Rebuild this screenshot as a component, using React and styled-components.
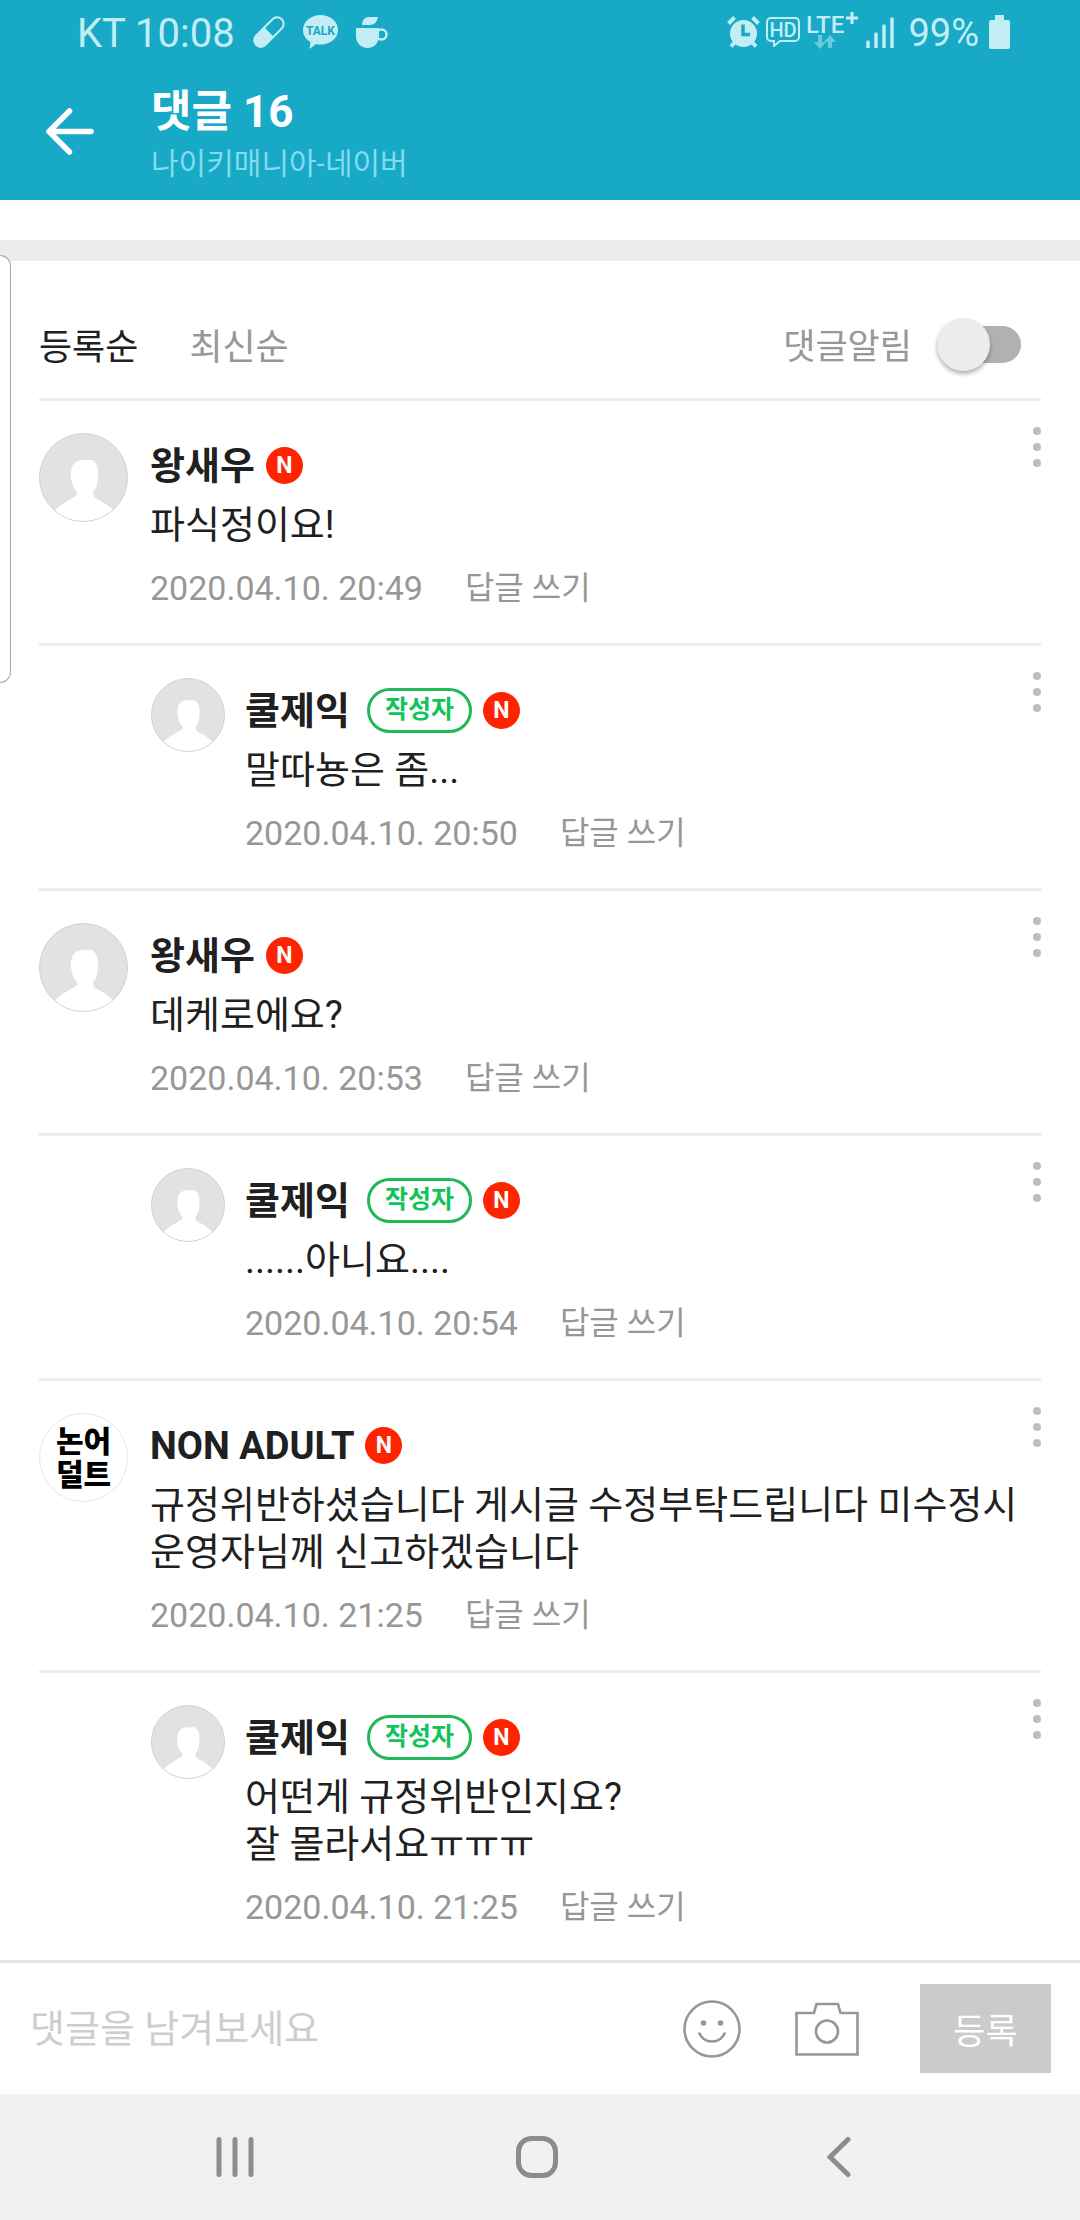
import React, { useState } from "react";
import styled, { createGlobalStyle } from "styled-components";

const GlobalStyle = createGlobalStyle`
  * {
    box-sizing: border-box;
  }
  body {
    margin: 0;
    background-color: #fff;
    color: #202020;
    font-family: Roboto, "Noto Sans CJK KR", sans-serif;
  }
  button {
    border: none;
    padding: 0;
    background: none;
    color: inherit;
    font: inherit;
    cursor: pointer;
  }
  svg {
    display: block;
    flex: none;
  }
`;

const Layout = styled.div`
  position: relative;
  display: flex;
  flex-direction: column;
  min-height: 100vh;
`;

const Top = styled.header`
  background-color: #17a9c5;
`;

const StatusBar = styled.div`
  display: flex;
  justify-content: space-between;
  align-items: center;
  height: 64px;
  padding: 0 70px 0 77px;
  color: #c3edf5;
`;

const StatusGroup = styled.div`
  display: flex;
  align-items: center;
  gap: ${(props) => props.$gap};
`;

const StatusText = styled.span`
  padding-top: 3px;
  font-size: 40px;
  line-height: 61px;
`;

const Percent = styled(StatusText)`
  margin: 0 4px 0 8px;
  font-size: 38px;
`;

const TitleBar = styled.div`
  display: flex;
  align-items: center;
  gap: 56px;
  height: 136px;
  padding: 0 45px;
`;

const TitleBox = styled.div`
  padding-top: 6px;
`;

const TitleText = styled.h1`
  margin: 0;
  color: #fff;
  font-size: 44px;
  font-weight: 700;
  line-height: 56px;
`;

const CafeName = styled.div`
  color: #80dcee;
  font-size: 30px;
  line-height: 47px;
`;

const Band = styled.div`
  height: 21px;
  margin-top: 40px;
  background-color: #ececec;
`;

const EdgeHandle = styled.div`
  position: absolute;
  top: 255px;
  left: 0;
  width: 11px;
  height: 428px;
  border: 1px solid #a8a8a8;
  border-left: none;
  border-radius: 0 14px 14px 0;
  background-color: #fff;
`;

const Content = styled.main`
  flex: 1;
  padding: 0 39px;
`;

const SortRow = styled.div`
  display: flex;
  align-items: center;
  gap: 51px;
  height: 137px;
  padding: 30px 20px 0 0;
`;

const SortBtn = styled.button`
  padding-top: 6px;
  color: ${(props) => (props.$active ? "#202020" : "#979797")};
  font-size: 36px;
  line-height: 48px;
`;

const AlarmLabel = styled.label`
  display: flex;
  align-items: center;
  gap: 25px;
  margin-left: auto;
  color: #979797;
  font-size: 35px;
  line-height: 48px;

  & > span {
    padding-top: 6px;
  }
`;

const Switch = styled.input.attrs({ type: "checkbox", role: "switch" })`
  appearance: none;
  position: relative;
  width: 84px;
  height: 53px;
  margin: 0;
  cursor: pointer;

  &::before {
    content: "";
    position: absolute;
    inset: 8px 0;
    border-radius: 19px;
    background-color: #b1b1b1;
  }
  &::after {
    content: "";
    position: absolute;
    top: 0;
    left: ${(props) => (props.checked ? "31px" : "0")};
    width: 53px;
    height: 53px;
    border-radius: 50%;
    background-color: #ececec;
    box-shadow: 0 3px 4px rgba(0, 0, 0, 0.3);
  }
`;

const CommentList = styled.ul`
  margin: 0;
  padding: 0;
  list-style: none;
`;

const CommentItem = styled.li`
  display: flex;
  align-items: flex-start;
  padding: 26px 0 35px ${(props) => (props.$reply ? "112px" : "0")};
  border-top: 3px solid #ececec;

  &:last-child {
    padding-bottom: 33px;
  }
`;

const Avatar = styled.div`
  display: grid;
  place-content: center;
  flex: none;
  width: ${(props) => (props.$reply ? "74px" : "89px")};
  height: ${(props) => (props.$reply ? "74px" : "89px")};
  margin: 6px ${(props) => (props.$reply ? "20px" : "22px")} 0 0;
  border: 1px solid ${(props) => (props.$text ? "#e6e6e6" : "#d2d2d2")};
  border-radius: 50%;
  background-color: ${(props) => (props.$text ? "#fff" : "#e2e2e2")};
  overflow: hidden;
  color: #000;
  font-size: 30px;
  font-weight: 900;
  line-height: 33px;
  white-space: pre-line;
`;

const Body = styled.div`
  flex: 1;
  padding-top: 14px;
`;

const NameRow = styled.div`
  display: flex;
  align-items: center;
  height: 48px;
`;

const Name = styled.strong`
  padding-top: 2px;
  font-size: 38px;
  font-weight: 700;
  line-height: 48px;
`;

const WriterBadge = styled.span`
  height: 45px;
  margin-left: 17px;
  padding: 0 15px;
  border: 3px solid #20b858;
  border-radius: 23px;
  color: #10c45a;
  font-size: 25px;
  font-weight: 700;
  line-height: 38px;
`;

const NewBadge = styled.span`
  width: 37px;
  height: 37px;
  margin-left: 11px;
  border-radius: 50%;
  background-color: #ff2400;
  color: #fff;
  font-size: 23px;
  font-weight: 700;
  line-height: 37px;
  text-align: center;
`;

const Message = styled.p`
  margin: 13px 0 19px;
  font-size: 38px;
  line-height: 47px;
  white-space: pre-line;
  word-break: keep-all;
`;

const Meta = styled.div`
  display: flex;
  align-items: center;
  gap: 42px;
  height: 40px;
  color: #979797;
  font-size: 34px;
  line-height: 40px;
`;

const ReplyBtn = styled.button`
  font-size: 32px;
`;

const WriteBar = styled.form`
  display: flex;
  align-items: center;
  height: 134px;
  padding: 0 29px;
  border-top: 3px solid #e2e3e2;
  background-color: #fff;
`;

const CommentInput = styled.input`
  flex: 1;
  min-width: 0;
  height: 89px;
  border: none;
  padding: 0 1px;
  outline: none;
  background: none;
  color: #202020;
  font: inherit;
  font-size: 38px;

  &::placeholder {
    color: #cdcdcd;
    opacity: 1;
  }
`;

const Tools = styled.div`
  display: flex;
  align-items: center;
  gap: 54px;
  margin-right: 61px;
`;

const SubmitBtn = styled.button`
  width: 131px;
  height: 89px;
  background-color: #cbcbcb;
  color: #fff;
  font-size: 35px;
`;

const NavBar = styled.nav`
  display: grid;
  grid-template-columns: repeat(3, 1fr);
  align-items: center;
  height: 126px;
  padding: 0 90px 0 84px;
  background-color: #f1f1f1;
`;

const NavBtn = styled.button`
  display: grid;
  place-content: center;
  height: 100%;
`;

const PillIcon = () => (
  <svg width="32" height="32" viewBox="0 0 32 32">
    <g transform="rotate(45 16 16)">
      <rect x="9.5" y="-2" width="13" height="36" rx="6.5" fill="none" stroke="#c3edf5" strokeWidth="2" />
      <path d="M9 16h14v12a7 7 0 0 1-14 0z" fill="#c3edf5" />
    </g>
  </svg>
);

const TalkIcon = () => (
  <svg width="35" height="34" viewBox="0 0 35 34">
    <path
      d="M17.500 0C27 0 35 6.500 35 15c0 8-7.500 14.500-17 14.500-2 0-3.500 0-5-.5L6.500 34 7.500 27C3 24.500 0 20 0 15 0 6.500 8 0 17.500 0z"
      fill="#c3edf5"
    />
    <text x="17.500" y="20" textAnchor="middle" fontFamily="Roboto" fontSize="12" fontWeight="700" fill="#17a9c5">
      TALK
    </text>
  </svg>
);

const CupIcon = () => (
  <svg width="32" height="31" viewBox="0 0 32 31">
    <path d="M6 8C6 3 9 0 13 0h9c-1 5-4 8-8 8z" fill="#c3edf5" />
    <path d="M0 11h23v8c0 7-5 12-11.500 12S0 26 0 19z" fill="#c3edf5" />
    <circle cx="25.500" cy="17.500" r="5" fill="none" stroke="#c3edf5" strokeWidth="2.500" />
  </svg>
);

const AlarmIcon = () => (
  <svg width="33" height="32" viewBox="0 0 33 32">
    <g stroke="#c3edf5" fill="none">
      <path d="M1.500 7.500 7.500 1.500M25.500 1.500l6 6" strokeWidth="4" />
      <path d="M8 26l-4 4.500M25 26l4 4.500" strokeWidth="4" />
    </g>
    <circle cx="16.500" cy="17.500" r="13.500" fill="#c3edf5" />
    <path d="M16 8.500v10h7" fill="none" stroke="#17a9c5" strokeWidth="3.500" />
  </svg>
);

const HdIcon = () => (
  <svg width="34" height="30" viewBox="0 0 34 30">
    <path
      d="M5 1h24a4 4 0 0 1 4 4v15a4 4 0 0 1-4 4H14l-6 5v-5H5a4 4 0 0 1-4-4V5a4 4 0 0 1 4-4z"
      fill="none"
      stroke="#c3edf5"
      strokeWidth="2"
    />
    <text x="17" y="20" textAnchor="middle" fontFamily="Roboto" fontSize="20" fontWeight="500" fill="#c3edf5">
      HD
    </text>
  </svg>
);

const LteIcon = () => (
  <svg width="54" height="40" viewBox="0 0 54 40">
    <text x="0" y="21" fontFamily="Roboto" fontSize="24" fontWeight="500" fill="#c3edf5">
      LTE
    </text>
    <path d="M46 0v12M40 6h12" stroke="#c3edf5" strokeWidth="3" />
    <path d="M12 23h4v7h4l-6 7-6-7h4z" fill="#68cbde" />
    <path d="M22 36h4v-6h4l-6-7-6 7h4z" fill="#68cbde" />
  </svg>
);

const SignalIcon = () => (
  <svg width="28" height="31" viewBox="0 0 28 31">
    <path d="M2 25v5M10 17v13M18 9v21M26 2v28" stroke="#c3edf5" strokeWidth="3.500" strokeLinecap="round" />
  </svg>
);

const BatteryIcon = () => (
  <svg width="21" height="34" viewBox="0 0 21 34">
    <path d="M6 0h9v5h4a2 2 0 0 1 2 2v25a2 2 0 0 1-2 2H2a2 2 0 0 1-2-2V7a2 2 0 0 1 2-2h4z" fill="#c3edf5" />
  </svg>
);

const BackArrow = () => (
  <svg width="50" height="48" viewBox="0 0 50 48">
    <path
      d="M24.500 3 4 23.500 24.500 44M5 23.500h41"
      fill="none"
      stroke="#fff"
      strokeWidth="5.500"
      strokeLinecap="round"
      strokeLinejoin="round"
    />
  </svg>
);

const PersonIcon = ({ size }) => (
  <svg width={size} height={size} viewBox="0 0 90 90">
    <path
      d="M32 41c0-9 4-14 13-14 4 0 6 0 9 0l1 2c3 2 4 6 4 12 0 8-1 14-5 18 0 5 2 6 6 8 7 4 12 7 15 12v13H15V79c4-6 9-8 15-12 5-3 9-4 8-8-4-4-6-10-6-18z"
      fill="#fff"
    />
  </svg>
);

const MoreIcon = () => (
  <svg width="8" height="40" viewBox="0 0 8 40">
    <circle cx="4" cy="4" r="4" fill="#bdbdbd" />
    <circle cx="4" cy="20" r="4" fill="#bdbdbd" />
    <circle cx="4" cy="36" r="4" fill="#bdbdbd" />
  </svg>
);

const SmileIcon = () => (
  <svg width="58" height="58" viewBox="0 0 58 58">
    <circle cx="29" cy="29" r="27.500" fill="none" stroke="#979797" strokeWidth="2.600" />
    <circle cx="20.500" cy="23" r="2.800" fill="#979797" />
    <circle cx="37.500" cy="23" r="2.800" fill="#979797" />
    <path d="M16 32.500c5 12 21 12 26 0" fill="none" stroke="#979797" strokeWidth="2.600" />
  </svg>
);

const CameraIcon = () => (
  <svg width="64" height="54" viewBox="0 0 64 54">
    <path d="M1.500 11h17.500l2.500-9h21.500l2.500 9h17v41.500H1.500z" fill="none" stroke="#979797" strokeWidth="2.600" />
    <circle cx="32" cy="29.500" r="11" fill="none" stroke="#979797" strokeWidth="2.600" />
  </svg>
);

const comments = [
  { id: 1, name: "왕새우", text: "파식정이요!", date: "2020.04.10. 20:49" },
  { id: 2, name: "쿨제익", text: "말따뇽은 좀...", date: "2020.04.10. 20:50", reply: true },
  { id: 3, name: "왕새우", text: "데케로에요?", date: "2020.04.10. 20:53" },
  { id: 4, name: "쿨제익", text: "......아니요....", date: "2020.04.10. 20:54", reply: true },
  {
    id: 5,
    name: "NON ADULT",
    text: "규정위반하셨습니다 게시글 수정부탁드립니다 미수정시 운영자님께 신고하겠습니다",
    date: "2020.04.10. 21:25",
    avatar: "논어\n덜트",
  },
  {
    id: 6,
    name: "쿨제익",
    text: "어떤게 규정위반인지요?\n잘 몰라서요ㅠㅠㅠ",
    date: "2020.04.10. 21:25",
    reply: true,
  },
];

const App = () => {
  const [sort, setSort] = useState("등록순");
  const [alarm, setAlarm] = useState(false);

  return (
    <Layout>
      <GlobalStyle />
      <Top>
        <StatusBar>
          <StatusGroup $gap="18px">
            <StatusText>KT 10:08</StatusText>
            <PillIcon />
            <TalkIcon />
            <CupIcon />
          </StatusGroup>
          <StatusGroup $gap="6px">
            <AlarmIcon />
            <HdIcon />
            <LteIcon />
            <SignalIcon />
            <Percent>99%</Percent>
            <BatteryIcon />
          </StatusGroup>
        </StatusBar>
        <TitleBar>
          <button aria-label="뒤로">
            <BackArrow />
          </button>
          <TitleBox>
            <TitleText>댓글 16</TitleText>
            <CafeName>나이키매니아-네이버</CafeName>
          </TitleBox>
        </TitleBar>
      </Top>
      <Band />
      <EdgeHandle />
      <Content>
        <SortRow>
          {["등록순", "최신순"].map((item) => (
            <SortBtn key={item} $active={sort === item} onClick={() => setSort(item)}>
              {item}
            </SortBtn>
          ))}
          <AlarmLabel>
            <span>댓글알림</span>
            <Switch checked={alarm} onChange={(e) => setAlarm(e.target.checked)} />
          </AlarmLabel>
        </SortRow>
        <CommentList>
          {comments.map((item) => (
            <CommentItem key={item.id} $reply={item.reply}>
              <Avatar $reply={item.reply} $text={item.avatar}>
                {item.avatar || <PersonIcon size={item.reply ? 74 : 90} />}
              </Avatar>
              <Body>
                <NameRow>
                  <Name>{item.name}</Name>
                  {item.reply && <WriterBadge>작성자</WriterBadge>}
                  <NewBadge>N</NewBadge>
                </NameRow>
                <Message>{item.text}</Message>
                <Meta>
                  <span>{item.date}</span>
                  <ReplyBtn>답글 쓰기</ReplyBtn>
                </Meta>
              </Body>
              <button aria-label="더보기">
                <MoreIcon />
              </button>
            </CommentItem>
          ))}
        </CommentList>
      </Content>
      <WriteBar onSubmit={(e) => e.preventDefault()}>
        <CommentInput placeholder="댓글을 남겨보세요" aria-label="댓글" />
        <Tools>
          <button type="button" aria-label="이모티콘">
            <SmileIcon />
          </button>
          <button type="button" aria-label="사진">
            <CameraIcon />
          </button>
        </Tools>
        <SubmitBtn>등록</SubmitBtn>
      </WriteBar>
      <NavBar>
        <NavBtn aria-label="최근 앱">
          <svg width="38" height="40" viewBox="0 0 38 40">
            <path d="M3 2.500v35M19 2.500v35M35 2.500v35" stroke="#8c8c8c" strokeWidth="5" strokeLinecap="round" />
          </svg>
        </NavBtn>
        <NavBtn aria-label="홈">
          <svg width="42" height="42" viewBox="0 0 42 42">
            <rect x="2.500" y="2.500" width="37" height="37" rx="13" fill="none" stroke="#8c8c8c" strokeWidth="5" />
          </svg>
        </NavBtn>
        <NavBtn aria-label="뒤로 가기">
          <svg width="24" height="40" viewBox="0 0 24 40">
            <path d="M21 2.500 3 20l18 17.500" fill="none" stroke="#8c8c8c" strokeWidth="5" strokeLinecap="round" />
          </svg>
        </NavBtn>
      </NavBar>
    </Layout>
  );
};

export default App;
